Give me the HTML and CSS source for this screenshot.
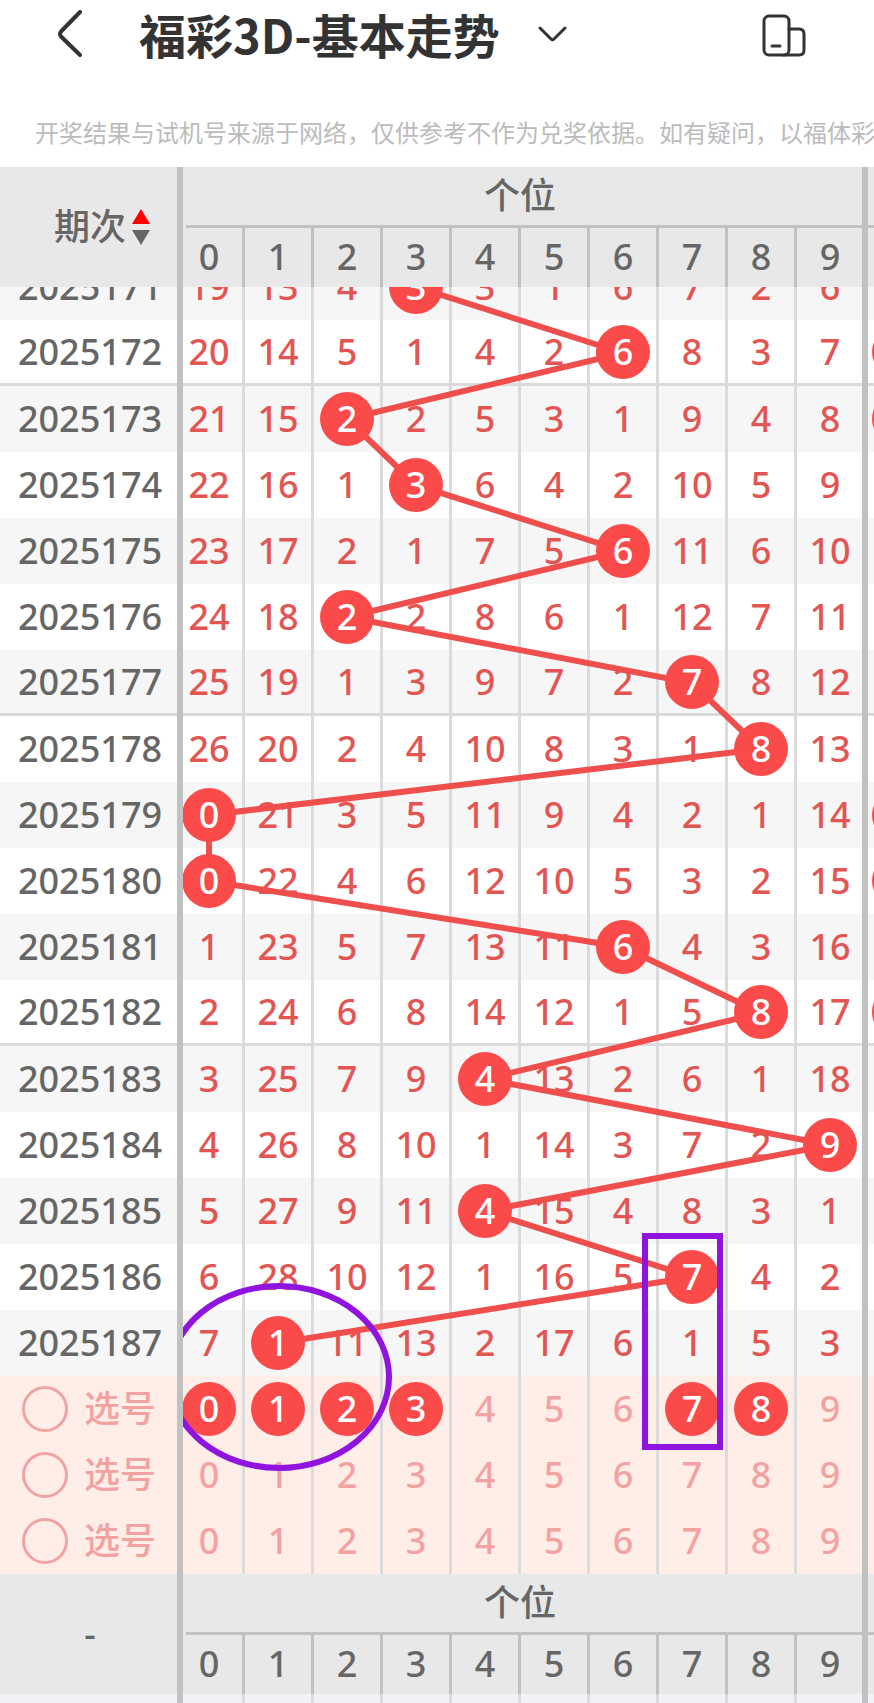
FILE: index.html
```html
<!DOCTYPE html>
<html lang="zh-CN">
<head>
    <meta charset="UTF-8">
    <meta name="viewport" content="width=device-width, initial-scale=1.0">
    <title>福彩3D-基本走势</title>
    <link rel="stylesheet" href="styles.css">
</head>
<body>
    <!-- 顶部标题栏 -->
    <header class="topbar">
        <button class="icon-btn back" aria-label="返回">
            <svg width="26" height="48" viewBox="0 0 26 48"><path d="M23 2 4 21.500Q2 24 4 26.500L23 45" /></svg>
        </button>
        <h1 class="title">福彩3D-基本走势</h1>
        <button class="icon-btn drop" aria-label="切换走势">
            <svg width="30" height="18" viewBox="0 0 30 18"><path d="M3 3 14 14Q15.500 15.500 17 14L28 3" /></svg>
        </button>
        <button class="icon-btn device" aria-label="切换屏幕">
            <svg width="44" height="44" viewBox="0 0 44 44"><rect x="2" y="2" width="25" height="39" rx="5" /><path d="M27 15H37Q42 15 42 20V36Q42 41 37 41H22M10 32H18" /></svg>
        </button>
        <button class="icon-btn more" aria-label="更多">
            <svg width="44" height="44" viewBox="0 0 44 44"><circle cx="22" cy="22" r="20" /></svg>
        </button>
    </header>

    <p class="notice">开奖结果与试机号来源于网络，仅供参考不作为兑奖依据。如有疑问，以福体彩</p>

    <!-- 走势图 -->
    <main class="chart">
        <table class="grid head">
            <colgroup><col class="col-issue"><col span="10"><col class="col-next"></colgroup>
            <tr class="group">
                <th rowspan="2"><button class="sort">期次
                    <svg width="18" height="36" viewBox="0 0 18 36"><path class="up" d="M9 0 18 15H0z" /><path class="down" d="M0 21H18L9 36z" /></svg>
                </button></th>
                <th colspan="10"><div class="group-title">个位</div></th>
                <th><div class="group-title next"></div></th>
            </tr>
            <tr class="digits"><th>0</th><th>1</th><th>2</th><th>3</th><th>4</th><th>5</th><th>6</th><th>7</th><th>8</th><th>9</th><th></th></tr>
        </table>

        <div class="scroller">
            <div class="sheet">
                <table class="grid body">
                    <colgroup><col class="col-issue"><col span="10"><col class="col-next"></colgroup>
                    <tbody class="history">
                        <tr><th>2025171</th><td>19</td><td>13</td><td>4</td><td><b class="ball">3</b></td><td>3</td><td>1</td><td>6</td><td>7</td><td>2</td><td>6</td><td></td></tr>
                        <tr class="line"><th>2025172</th><td>20</td><td>14</td><td>5</td><td>1</td><td>4</td><td>2</td><td><b class="ball">6</b></td><td>8</td><td>3</td><td>7</td><td><b class="ball"></b></td></tr>
                        <tr><th>2025173</th><td>21</td><td>15</td><td><b class="ball">2</b></td><td>2</td><td>5</td><td>3</td><td>1</td><td>9</td><td>4</td><td>8</td><td><b class="ball"></b></td></tr>
                        <tr><th>2025174</th><td>22</td><td>16</td><td>1</td><td><b class="ball">3</b></td><td>6</td><td>4</td><td>2</td><td>10</td><td>5</td><td>9</td><td></td></tr>
                        <tr><th>2025175</th><td>23</td><td>17</td><td>2</td><td>1</td><td>7</td><td>5</td><td><b class="ball">6</b></td><td>11</td><td>6</td><td>10</td><td></td></tr>
                        <tr><th>2025176</th><td>24</td><td>18</td><td><b class="ball">2</b></td><td>2</td><td>8</td><td>6</td><td>1</td><td>12</td><td>7</td><td>11</td><td></td></tr>
                        <tr class="line"><th>2025177</th><td>25</td><td>19</td><td>1</td><td>3</td><td>9</td><td>7</td><td>2</td><td><b class="ball">7</b></td><td>8</td><td>12</td><td></td></tr>
                        <tr><th>2025178</th><td>26</td><td>20</td><td>2</td><td>4</td><td>10</td><td>8</td><td>3</td><td>1</td><td><b class="ball">8</b></td><td>13</td><td></td></tr>
                        <tr><th>2025179</th><td><b class="ball">0</b></td><td>21</td><td>3</td><td>5</td><td>11</td><td>9</td><td>4</td><td>2</td><td>1</td><td>14</td><td><b class="ball"></b></td></tr>
                        <tr><th>2025180</th><td><b class="ball">0</b></td><td>22</td><td>4</td><td>6</td><td>12</td><td>10</td><td>5</td><td>3</td><td>2</td><td>15</td><td><b class="ball"></b></td></tr>
                        <tr><th>2025181</th><td>1</td><td>23</td><td>5</td><td>7</td><td>13</td><td>11</td><td><b class="ball">6</b></td><td>4</td><td>3</td><td>16</td><td></td></tr>
                        <tr class="line"><th>2025182</th><td>2</td><td>24</td><td>6</td><td>8</td><td>14</td><td>12</td><td>1</td><td>5</td><td><b class="ball">8</b></td><td>17</td><td><b class="ball"></b></td></tr>
                        <tr><th>2025183</th><td>3</td><td>25</td><td>7</td><td>9</td><td><b class="ball">4</b></td><td>13</td><td>2</td><td>6</td><td>1</td><td>18</td><td></td></tr>
                        <tr><th>2025184</th><td>4</td><td>26</td><td>8</td><td>10</td><td>1</td><td>14</td><td>3</td><td>7</td><td>2</td><td><b class="ball">9</b></td><td></td></tr>
                        <tr><th>2025185</th><td>5</td><td>27</td><td>9</td><td>11</td><td><b class="ball">4</b></td><td>15</td><td>4</td><td>8</td><td>3</td><td>1</td><td></td></tr>
                        <tr><th>2025186</th><td>6</td><td>28</td><td>10</td><td>12</td><td>1</td><td>16</td><td>5</td><td><b class="ball">7</b></td><td>4</td><td>2</td><td></td></tr>
                        <tr><th>2025187</th><td>7</td><td><b class="ball">1</b></td><td>11</td><td>13</td><td>2</td><td>17</td><td>6</td><td>1</td><td>5</td><td>3</td><td></td></tr>
                    </tbody>
                    <!-- 选号区 -->
                    <tbody class="picks">
                        <tr>
                            <th><label class="pick"><input type="checkbox">选号</label></th>
                            <td><button class="num ball">0</button></td><td><button class="num ball">1</button></td><td><button class="num ball">2</button></td><td><button class="num ball">3</button></td><td><button class="num">4</button></td>
                            <td><button class="num">5</button></td><td><button class="num">6</button></td><td><button class="num ball">7</button></td><td><button class="num ball">8</button></td><td><button class="num">9</button></td><td></td>
                        </tr>
                        <tr>
                            <th><label class="pick"><input type="checkbox">选号</label></th>
                            <td><button class="num">0</button></td><td><button class="num">1</button></td><td><button class="num">2</button></td><td><button class="num">3</button></td><td><button class="num">4</button></td>
                            <td><button class="num">5</button></td><td><button class="num">6</button></td><td><button class="num">7</button></td><td><button class="num">8</button></td><td><button class="num">9</button></td><td></td>
                        </tr>
                        <tr>
                            <th><label class="pick"><input type="checkbox">选号</label></th>
                            <td><button class="num">0</button></td><td><button class="num">1</button></td><td><button class="num">2</button></td><td><button class="num">3</button></td><td><button class="num">4</button></td>
                            <td><button class="num">5</button></td><td><button class="num">6</button></td><td><button class="num">7</button></td><td><button class="num">8</button></td><td><button class="num">9</button></td><td></td>
                        </tr>
                    </tbody>
                </table>

                <!-- 走势连线，每格 69 x 66 -->
                <svg class="overlay trend" viewBox="0 0 690 1320" preserveAspectRatio="none">
                    <polyline points="240,33 447,99 171,165 240,231 447,297 171,363 516,429 585,495 33,561 33,627 447,693 585,759 309,825 654,891 309,957 516,1023 102,1089" />
                </svg>
                <!-- 手绘标记 -->
                <svg class="overlay marks" viewBox="0 0 690 1320" preserveAspectRatio="none">
                    <ellipse cx="103" cy="1123" rx="110" ry="91" />
                    <rect x="469" y="982" width="75" height="211" />
                </svg>
            </div>
        </div>

        <table class="grid head">
            <colgroup><col class="col-issue"><col span="10"><col class="col-next"></colgroup>
            <tr class="group">
                <th class="dash" rowspan="2">-</th>
                <th colspan="10"><div class="group-title">个位</div></th>
                <th><div class="group-title next"></div></th>
            </tr>
            <tr class="digits"><th>0</th><th>1</th><th>2</th><th>3</th><th>4</th><th>5</th><th>6</th><th>7</th><th>8</th><th>9</th><th></th></tr>
            <tr class="tail"><td></td><td></td><td></td><td></td><td></td><td></td><td></td><td></td><td></td><td></td><td></td><td></td></tr>
        </table>
    </main>
</body>
</html>
```
FILE: styles.css
```css
* {
    box-sizing: border-box;
}

body {
    margin: 0;
    background-color: #fff;
    color: #666;
    font-family: "Noto Sans", "Noto Sans CJK SC", sans-serif;
    font-size: 36px;
    overflow-x: hidden;
}

button {
    padding: 0;
    border: none;
    background: none;
    color: inherit;
    font: inherit;
    cursor: pointer;
}

svg {
    display: block;
}

/* 顶部标题栏 */
.topbar {
    display: flex;
    align-items: center;
    height: 68px;
    padding-left: 57px;
    overflow: hidden;
}

.title {
    margin: 0 0 0 56px;
    color: #333;
    font-family: "Noto Sans CJK SC", sans-serif;
    font-size: 47px;
    line-height: 68px;
    font-weight: bold;
    white-space: nowrap;
}

.icon-btn {
    flex-shrink: 0;
}

.icon-btn svg {
    fill: none;
    stroke: #333;
    stroke-width: 3;
    stroke-linecap: round;
    stroke-linejoin: round;
}

.back svg {
    stroke-width: 4;
}

.drop {
    margin-left: 37px;
}

.device {
    margin-top: 4px;
    margin-left: auto;
}

.more {
    margin-top: 4px;
    margin-left: 68px;
    margin-right: -44px;
}

.notice {
    margin: 0;
    padding: 52px 0 23px 35px;
    color: #bbb;
    font-family: "Noto Sans CJK SC", sans-serif;
    font-size: 24px;
    line-height: 24px;
    white-space: nowrap;
    overflow: hidden;
}

/* 走势图 */
.chart {
    position: relative;
    overflow: hidden;
}

/* 左右两条粗分隔线 */
.chart::before,
.chart::after {
    content: "";
    position: absolute;
    top: 0;
    bottom: 0;
    z-index: 4;
    width: 6px;
    background-color: #c1c1c1;
}

.chart::before {
    left: 177px;
}

.chart::after {
    right: 6px;
}

.grid {
    width: 100%;
    table-layout: fixed;
    border-collapse: separate;
    border-spacing: 0;
}

.col-issue {
    width: 176px;
}

.col-next {
    width: 8px;
}

.grid th,
.grid td {
    padding: 0;
    font-weight: 500;
    line-height: 54px;
    text-align: center;
    white-space: nowrap;
}

/* 表头 */
.head th {
    background-color: #e8e8e8;
}

.group {
    height: 61px;
}

.group-title {
    height: 61px;
    margin-left: 10px;
    padding-top: 2px;
    padding-right: 12px;
    border-bottom: 3px solid #c1c1c1;
}

.group-title.next {
    margin-left: 0;
    padding-right: 0;
}

.digits {
    height: 59px;
}

.digits th {
    padding-bottom: 2px;
    border-right: 3px solid #c1c1c1;
}

.sort {
    display: flex;
    align-items: center;
    justify-content: flex-end;
    gap: 6px;
    width: 100%;
    padding-right: 26px;
}

.sort .up {
    fill: #f00;
}

.sort .down {
    fill: #666;
}

.head .dash {
    padding-left: 4px;
}

.tail {
    height: 9px;
}

.tail td {
    border-right: 3px solid #dbdbdb;
    background-color: #f1f1f7;
}

/* 期次列表 */
.scroller {
    overflow: hidden;
}

.sheet {
    position: relative;
    margin-top: -33px;
}

.body tr {
    height: 66px;
}

.body td {
    border-right: 3px solid #dbdbdb;
    color: #e35552;
}

.history tr:nth-child(odd) {
    background-color: #f6f6f6;
}

.history .line th,
.history .line td {
    border-bottom: 3px solid #dbdbdb;
}

.body th {
    padding-left: 4px;
}

.digits th:last-child,
.tail td:first-child,
.tail td:last-child,
.body td:last-child {
    border-right: none;
}

.body td:last-child {
    padding-left: 6px;
    text-align: left;
}

.ball {
    position: relative;
    z-index: 2;
    display: block;
    width: 54px;
    height: 54px;
    margin: 0 auto;
    border-radius: 50%;
    background-color: #fa4a49;
    color: #fff;
    font-weight: 500;
    line-height: 54px;
}

.body td:last-child .ball {
    margin: 0;
}

/* 选号区 */
.picks tr {
    background-color: #ffeee8;
    color: #f3a2a2;
}

.picks td {
    color: #f3a2a2;
}

.num {
    display: block;
    width: 54px;
    height: 54px;
    margin: 0 auto;
    line-height: 54px;
}

.num.ball {
    color: #fff;
}

.pick {
    display: flex;
    align-items: center;
    gap: 16px;
    padding-left: 18px;
}

.pick input {
    appearance: none;
    width: 46px;
    height: 46px;
    margin: 0;
    border: 3px solid #f0a3a3;
    border-radius: 50%;
}

/* 连线和标记 */
.overlay {
    position: absolute;
    top: 0;
    left: 176px;
    width: calc(100% - 184px);
    height: 100%;
    fill: none;
    pointer-events: none;
}

.trend {
    z-index: 1;
    stroke: #ef4f4c;
    stroke-width: 6;
}

.marks {
    z-index: 3;
    stroke: #9013de;
    stroke-width: 6;
    clip-path: inset(0 0 0 4px);
}
```
